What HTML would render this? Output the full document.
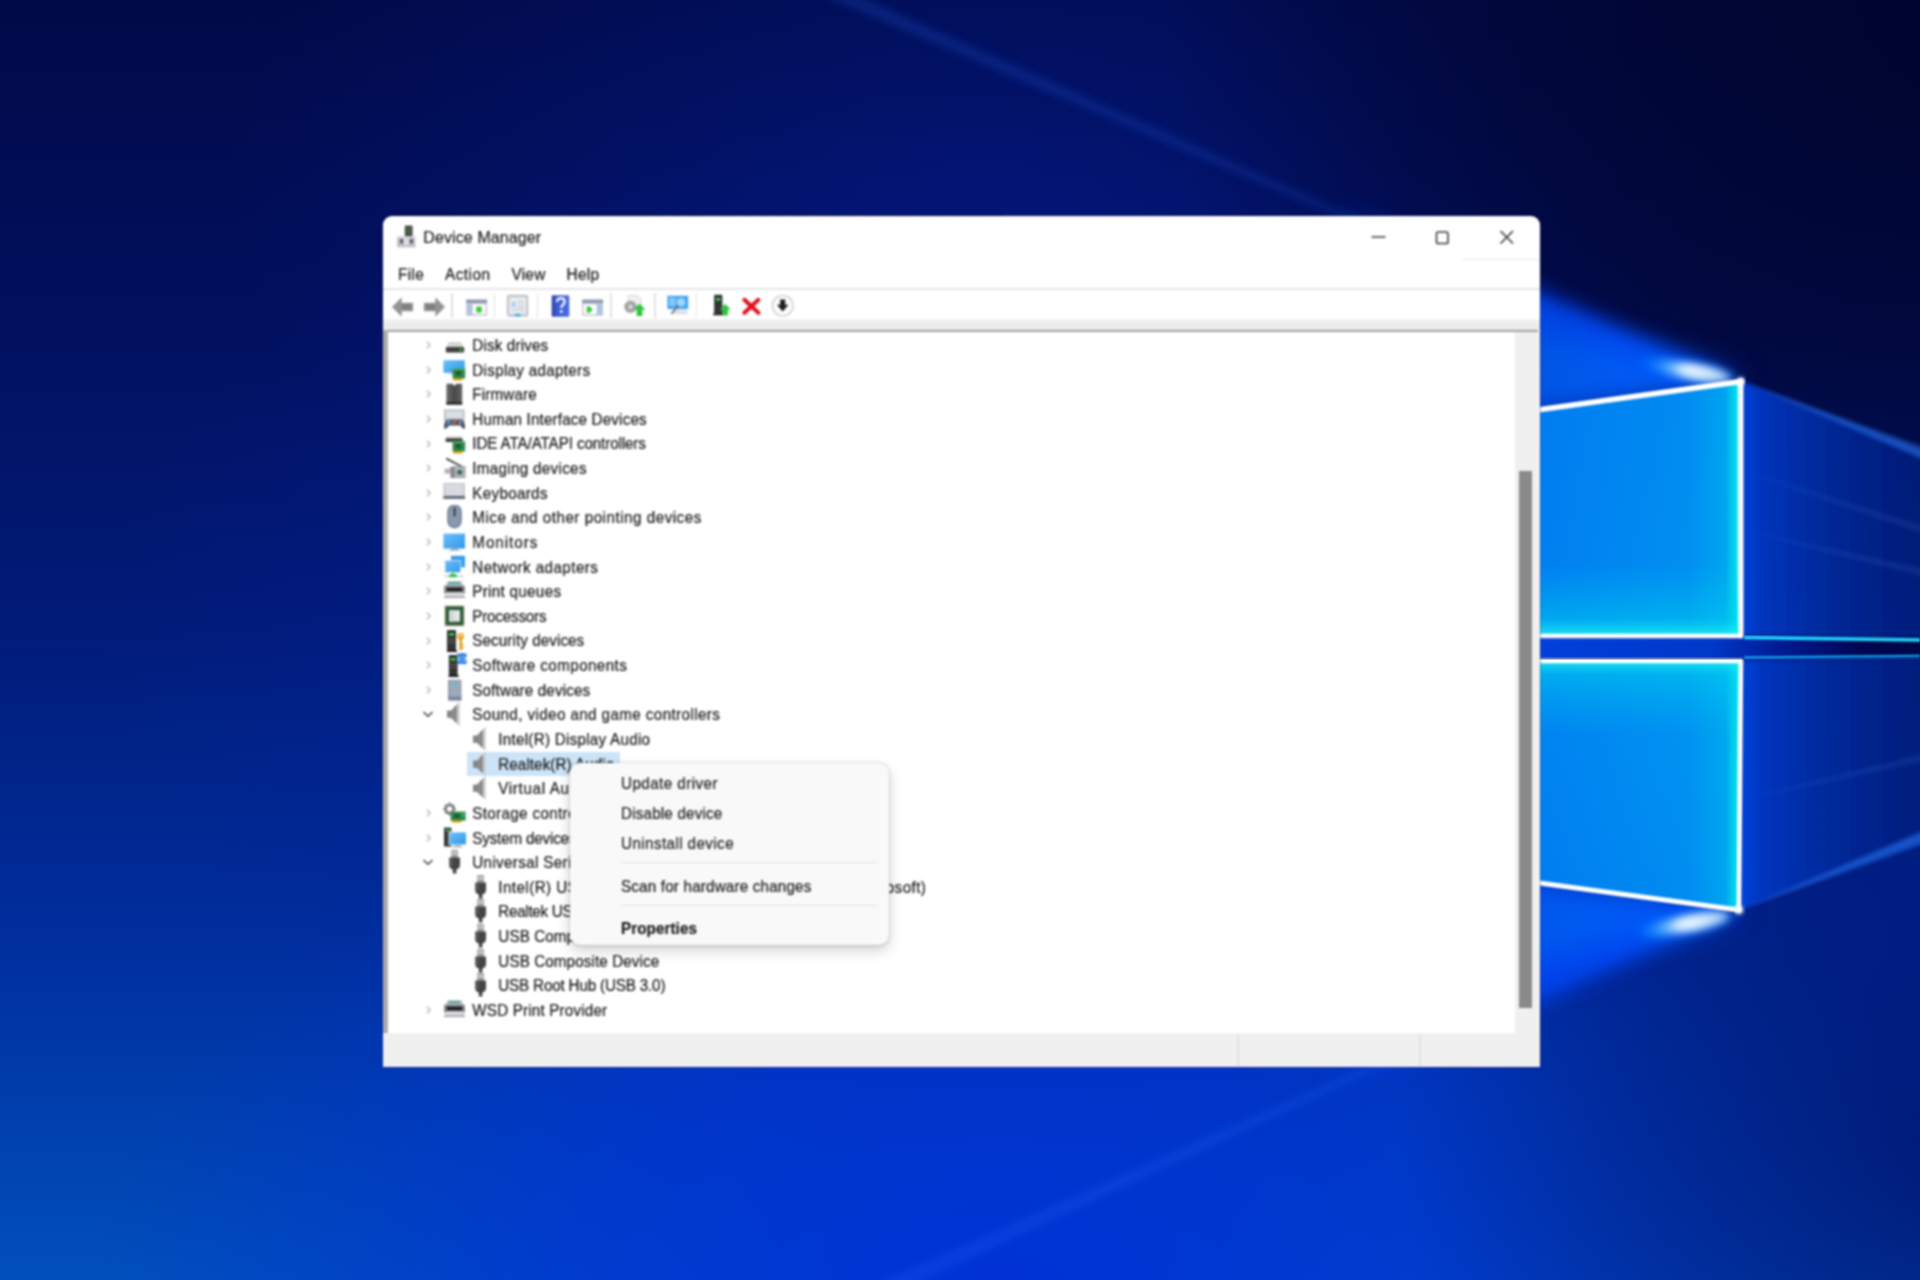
<!DOCTYPE html>
<html><head><meta charset="utf-8"><title>Device Manager</title>
<style>
html,body{margin:0;padding:0;width:1920px;height:1280px;overflow:hidden;background:#011c78;font-family:"Liberation Sans",sans-serif;}
.ab{position:absolute;}
#desk{position:absolute;left:0;top:0;width:1920px;height:1280px;}
#win{position:absolute;left:383px;top:216px;width:1156.6px;height:850.5px;background:#fff;border-radius:9px 9px 2px 2px;overflow:hidden;box-shadow:0 0 0 1px rgba(20,30,80,.35);}
#soft{filter:blur(.8px);position:absolute;left:0;top:0;width:1920px;height:1280px;}
.t,.ci,.mn,#title{transform:scaleY(1.05);transform-origin:0 76.3%;}
.t{position:absolute;white-space:nowrap;font-size:15.2px;line-height:20px;color:#1b1b1b;-webkit-text-stroke:.22px #1b1b1b;}
.sel{position:absolute;background:#cce4f7;}
#title{position:absolute;left:423.3px;top:227.8px;font-size:16px;line-height:20px;color:#1b1b1b;white-space:nowrap;-webkit-text-stroke:.2px #1b1b1b;}
.mn{position:absolute;top:265px;font-size:15.4px;line-height:20px;color:#1b1b1b;white-space:nowrap;-webkit-text-stroke:.22px #1b1b1b;}
#tbline{position:absolute;left:383px;top:288px;width:1157px;height:2px;background:#e6e6e6;}
#tbgrey{position:absolute;left:383px;top:319px;width:1157px;height:11px;background:linear-gradient(#f6f6f6,#ececec 30%,#ececec);}
#tbdark{position:absolute;left:386px;top:329.6px;width:1152px;height:2.6px;background:linear-gradient(#a0a0a0,#8e8e8e 60%,#d8d8d8);}
#lborder{position:absolute;left:383px;top:330px;width:5px;height:702.5px;background:linear-gradient(90deg,#b8b8b8,#a6a6a6 50%,#b4b4b4);}
#sbtrack{position:absolute;left:1515px;top:332px;width:25px;height:702px;background:#f0f0f0;}
#sbthumb{position:absolute;left:1519.2px;top:470.5px;width:12.8px;height:537.5px;background:#8a8a8a;}
#status{position:absolute;left:383px;top:1032.5px;width:1157px;height:34px;background:#f0f0f0;}
.sdiv{position:absolute;top:1036px;width:1.5px;height:30px;background:#e0e0e0;}
#ctx{position:absolute;left:569.7px;top:763.3px;width:319.7px;height:181.5px;background:#f9f9f9;border-radius:10px;box-shadow:0 0 0 1px rgba(0,0,0,.06),0 6px 14px rgba(0,0,0,.17),0 1px 4px rgba(0,0,0,.10);}
.ci{position:absolute;left:621px;font-size:15.2px;line-height:20px;color:#1b1b1b;white-space:nowrap;-webkit-text-stroke:.22px #1b1b1b;}
.tsep{position:absolute;top:292.5px;width:1.6px;height:25.5px;background:#e2e2e2;}
.cs{position:absolute;left:622px;width:256px;height:1.6px;background:#e3e3e3;}
</style></head>
<body>
<div id="desk">
<svg class="ab" style="left:0;top:0" width="1920" height="1280" viewBox="0 0 1920 1280">
<defs>
 <linearGradient id="gV" x1="0" y1="0" x2="0" y2="1">
  <stop offset="0" stop-color="#010a48"/><stop offset=".25" stop-color="#01105e"/><stop offset=".5" stop-color="#011c7a"/><stop offset=".75" stop-color="#0030a0"/><stop offset="1" stop-color="#0050bc"/>
 </linearGradient>
 <radialGradient id="gTR" cx="1960" cy="40" r="640" gradientUnits="userSpaceOnUse" gradientTransform="translate(1960 40) scale(1.25 1) translate(-1960 -40)">
  <stop offset="0" stop-color="#00042c" stop-opacity=".9"/><stop offset=".55" stop-color="#00042c" stop-opacity=".6"/><stop offset="1" stop-color="#00042a" stop-opacity="0"/>
 </radialGradient>
 <radialGradient id="gBR" cx="1960" cy="1150" r="560" gradientUnits="userSpaceOnUse">
  <stop offset="0" stop-color="#000c66" stop-opacity=".75"/><stop offset=".6" stop-color="#000c66" stop-opacity=".36"/><stop offset="1" stop-color="#000c66" stop-opacity="0"/>
 </radialGradient>
 <radialGradient id="gBot" cx="1000" cy="1300" r="700" gradientUnits="userSpaceOnUse" gradientTransform="translate(1000 1300) scale(1.3 .75) translate(-1000 -1300)">
  <stop offset="0" stop-color="#0030d8" stop-opacity=".95"/><stop offset=".5" stop-color="#0030d8" stop-opacity=".6"/><stop offset="1" stop-color="#0030d8" stop-opacity="0"/>
 </radialGradient>
 <radialGradient id="gTopC" cx="980" cy="180" r="760" gradientUnits="userSpaceOnUse" gradientTransform="translate(980 180) scale(1 .55) translate(-980 -180)">
  <stop offset="0" stop-color="#0420a0" stop-opacity=".38"/><stop offset="1" stop-color="#0420a0" stop-opacity="0"/>
 </radialGradient>
 <radialGradient id="gMid" cx="1000" cy="640" r="900" gradientUnits="userSpaceOnUse" gradientTransform="translate(1000 640) scale(1 .6) translate(-1000 -640)">
  <stop offset="0" stop-color="#0020a8" stop-opacity=".5"/><stop offset="1" stop-color="#0020a8" stop-opacity="0"/>
 </radialGradient>
 <linearGradient id="gPane" gradientUnits="userSpaceOnUse" x1="1300" y1="0" x2="1741" y2="0">
  <stop offset="0" stop-color="#006cf0"/><stop offset=".55" stop-color="#007cf0"/><stop offset=".88" stop-color="#008cf0"/><stop offset=".965" stop-color="#00a4f0"/><stop offset=".988" stop-color="#00dcea"/><stop offset="1" stop-color="#c0ffff"/>
 </linearGradient>
 <linearGradient id="gPaneB" x1="0" y1="0" x2="0" y2="1">
  <stop offset="0" stop-color="#00d0f0" stop-opacity="0"/><stop offset=".72" stop-color="#00d0f0" stop-opacity=".05"/><stop offset=".93" stop-color="#00d8f0" stop-opacity=".45"/><stop offset="1" stop-color="#20f0f0" stop-opacity=".9"/>
 </linearGradient>
 <linearGradient id="gPaneT" x1="0" y1="0" x2="0" y2="1">
  <stop offset="0" stop-color="#20f0f0" stop-opacity=".9"/><stop offset=".06" stop-color="#00d8f0" stop-opacity=".5"/><stop offset=".3" stop-color="#00c0f0" stop-opacity=".12"/><stop offset="1" stop-color="#00d0f0" stop-opacity="0"/>
 </linearGradient>
 <linearGradient id="gProj" gradientUnits="userSpaceOnUse" x1="1741" y1="0" x2="1920" y2="0">
  <stop offset="0" stop-color="#0044dc" stop-opacity="1"/><stop offset=".12" stop-color="#0036c0" stop-opacity=".95"/><stop offset=".5" stop-color="#002a9c" stop-opacity=".9"/><stop offset="1" stop-color="#001c7c" stop-opacity=".85"/>
 </linearGradient>
 <linearGradient id="gGap" gradientUnits="userSpaceOnUse" x1="1540" y1="0" x2="1920" y2="0">
  <stop offset="0" stop-color="#0040dc"/><stop offset=".45" stop-color="#0038c8"/><stop offset=".62" stop-color="#001c98"/><stop offset=".85" stop-color="#000650"/><stop offset="1" stop-color="#000648"/>
 </linearGradient>
 <radialGradient id="gFlare"><stop offset="0" stop-color="#f4fbff" stop-opacity="1"/><stop offset=".3" stop-color="#9cd8ff" stop-opacity=".95"/><stop offset=".6" stop-color="#1c9cff" stop-opacity=".7"/><stop offset="1" stop-color="#0060ff" stop-opacity="0"/></radialGradient>
 <linearGradient id="gFanM" gradientUnits="userSpaceOnUse" x1="1330" y1="0" x2="1700" y2="0"><stop offset="0" stop-color="#000"/><stop offset=".45" stop-color="#ccc"/><stop offset="1" stop-color="#fff"/></linearGradient>
 <mask id="mFan" maskUnits="userSpaceOnUse" x="0" y="0" width="1920" height="1280"><rect width="1920" height="1280" fill="url(#gFanM)"/></mask>
 <filter id="b2"><feGaussianBlur stdDeviation="2"/></filter>
 <filter id="b1"><feGaussianBlur stdDeviation="1"/></filter>
 <filter id="b4"><feGaussianBlur stdDeviation="4"/></filter>
 <filter id="b10"><feGaussianBlur stdDeviation="10"/></filter>
 <filter id="b20"><feGaussianBlur stdDeviation="18"/></filter>
</defs>
<rect width="1920" height="1280" fill="url(#gV)"/>
<rect width="1920" height="1280" fill="url(#gMid)"/>
<rect width="1920" height="1280" fill="url(#gTopC)"/>
<rect width="1920" height="1280" fill="url(#gBot)"/>
<rect width="1920" height="1280" fill="url(#gTR)"/>
<rect width="1920" height="1280" fill="url(#gBR)"/>
<!-- faint long rays -->
<g filter="url(#b4)">
 <path d="M1741 389 L806 -12 L840 -12 Z" fill="#2a6cff" opacity=".2"/>
 <path d="M1739 901 L858 1292 L898 1292 Z" fill="#2a6cff" opacity=".2"/>
</g>
<!-- fans above / below panes -->
<g mask="url(#mFan)">
<g filter="url(#b10)">
 <path d="M1741 381 L1300 186 L1300 443 Z" fill="#0048ff" opacity="1"/>
 <path d="M1739 910 L1300 1112 L1300 850 Z" fill="#0044f8" opacity="1"/>
</g>
<g filter="url(#b20)">
 <path d="M1741 381 L1420 300 L1420 430 Z" fill="#0070ff" opacity=".7"/>
 <path d="M1739 910 L1420 990 L1420 870 Z" fill="#0070ff" opacity=".7"/>
</g>
</g>
<!-- projection to the right -->
<g filter="url(#b2)">
 <path d="M1741 381 L1930 456 L1930 638 L1741 636 Z" fill="url(#gProj)"/>
 <path d="M1741 660 L1930 658 L1930 834 L1739 910 Z" fill="url(#gProj)"/>
</g>
<g filter="url(#b2)" opacity=".55">
 <path d="M1741 381 L1930 450 L1930 462 Z" fill="#2a7cff"/>
 <path d="M1739 910 L1930 828 L1930 841 Z" fill="#2a7cff"/>
</g>
<g filter="url(#b2)" opacity=".11">
 <path d="M1741 470 L1930 528 L1930 536 Z" fill="#6aa8ff"/>
 <path d="M1741 530 L1930 570 L1930 578 Z" fill="#6aa8ff"/>
 <path d="M1741 800 L1930 752 L1930 760 Z" fill="#6aa8ff"/>
</g>
<!-- flares -->
<g filter="url(#b4)">
 <ellipse cx="1690" cy="371" rx="56" ry="13" transform="rotate(11 1688 371)" fill="url(#gFlare)"/>
 <ellipse cx="1686" cy="924" rx="58" ry="14" transform="rotate(-11 1685 924)" fill="url(#gFlare)"/>
</g>
<g filter="url(#b4)"><ellipse cx="1704" cy="373" rx="27" ry="6" transform="rotate(11 1704 373)" fill="#fff" opacity=".75"/><ellipse cx="1701" cy="921" rx="28" ry="6.5" transform="rotate(-11 1701 921)" fill="#fff" opacity=".75"/></g>
<!-- gap band -->
<rect x="1300" y="638" width="620" height="20" fill="url(#gGap)"/>
<!-- panes -->
<path d="M1300 443 L1741 381 L1741 636 L1300 636 Z" fill="url(#gPane)"/>
<path d="M1300 443 L1741 381 L1741 636 L1300 636 Z" fill="url(#gPaneB)"/>
<path d="M1300 660 L1741 660 L1739 910 L1300 850 Z" fill="url(#gPane)"/>
<path d="M1300 660 L1741 660 L1739 910 L1300 850 Z" fill="url(#gPaneT)"/>
<!-- bright edges -->
<g filter="url(#b1)" fill="none" stroke="#ffffff" stroke-linecap="round">
 <path d="M1300 443 L1741 381.5" stroke-width="5.5"/>
 <path d="M1741 381 L1741 636" stroke-width="5"/>
 <path d="M1300 636 L1741 636" stroke-width="4.5"/>
 <path d="M1300 661 L1741 661" stroke-width="4.5"/>
 <path d="M1741 661 L1739 910" stroke-width="4.5"/>
 <path d="M1300 850.5 L1739 910" stroke-width="5"/>
</g>
<g filter="url(#b2)"><circle cx="1741" cy="381" r="3.6" fill="#fff"/><circle cx="1739" cy="910" r="4" fill="#fff"/></g>
<g filter="url(#b1)" fill="none">
 <path d="M1744 637.5 L1920 640" stroke-width="3.5" stroke="#20d8ff"/>
 <path d="M1744 657.5 L1920 656" stroke-width="2.5" stroke="#10a0f0"/>
</g>
</svg>

</div>
<svg width="0" height="0" style="position:absolute"><defs>
<linearGradient id="lgDark" x1="0" y1="0" x2="1" y2="0"><stop offset="0" stop-color="#6c6c6c"/><stop offset=".5" stop-color="#484848"/><stop offset="1" stop-color="#666"/></linearGradient>
<linearGradient id="lgBlue" x1="0" y1="0" x2="1" y2="1"><stop offset="0" stop-color="#6cc0fa"/><stop offset="1" stop-color="#2f98ea"/></linearGradient>
<linearGradient id="lgSpk" x1="0" y1="0" x2="1" y2="0"><stop offset="0" stop-color="#7c7c7c"/><stop offset=".55" stop-color="#a8a8a8"/><stop offset="1" stop-color="#d4d4d4"/></linearGradient>
<linearGradient id="lgGrey" x1="0" y1="0" x2="0" y2="1"><stop offset="0" stop-color="#d6d9de"/><stop offset="1" stop-color="#aeb3ba"/></linearGradient>
<linearGradient id="lgHelp" x1="0" y1="0" x2="1" y2="0"><stop offset="0" stop-color="#2a3f9c"/><stop offset=".25" stop-color="#3a5ad4"/><stop offset="1" stop-color="#4a6ae0"/></linearGradient>
<symbol id="i-devmgr" viewBox="0 0 22 24">
 <rect x="1" y="12.6" width="18.4" height="10.8" fill="#c4c4c8"/><rect x="1" y="12.6" width="18.4" height="1.6" fill="#d8d8dc"/>
 <rect x="4" y="15" width="3" height="4.6" fill="#606064"/><rect x="14" y="15" width="3" height="4.6" fill="#606064"/><rect x="8.6" y="14.6" width="3.4" height="6.4" fill="#e4e4ea"/>
 <rect x="8.8" y="1.6" width="7.8" height="10.6" rx="1" fill="#4c4c4c"/><rect x="10.6" y="3.6" width="4.2" height="6" rx=".8" fill="#3c6a3c"/>
</symbol>
<symbol id="i-disk" viewBox="0 0 24 24"><path d="M6 9 H18 L21 14.5 H3 Z" fill="#d4d4d4"/><rect x="2.8" y="14" width="18.4" height="5.6" rx="1.4" fill="#3e3e3e"/><rect x="16.4" y="15.8" width="3" height="1.8" fill="#48c848"/></symbol>
<symbol id="i-card" viewBox="0 0 24 24"><rect x="10" y="18" width="9.6" height="3.6" rx="1.6" fill="#f0a000"/><rect x="9.6" y="9.4" width="12.6" height="10" fill="#2e8c4c"/><rect x="12.6" y="12" width="5.6" height="4.6" fill="#1d5c30"/><rect x="9.6" y="9.4" width="12.6" height="1.4" fill="#58b070"/></symbol>
<symbol id="i-display" viewBox="0 0 24 24"><rect x=".4" y="2.2" width="21.4" height="12.6" fill="url(#lgBlue)"/><rect x="7" y="14.8" width="8" height="1.6" fill="#b8c4d0"/><use href="#i-card" y="1"/></symbol>
<symbol id="i-firmware" viewBox="0 0 24 24"><path d="M3.4 1.8 H9.4 L11.4 4 L13.4 1.8 H19.2 V22.6 H3.4 Z" fill="url(#lgDark)"/><rect x="3.4" y="20" width="15.8" height="2.6" fill="#2a2a2a"/></symbol>
<symbol id="i-hid" viewBox="0 0 24 24"><rect x="1.4" y="3" width="19.6" height="10.6" fill="#cdd1d8" stroke="#a4aab4" stroke-width=".8"/><rect x="3.4" y="5" width="15.6" height="1.6" fill="#e8eaee"/><rect x="3.4" y="8" width="15.6" height="1.6" fill="#e8eaee"/>
 <path d="M1 21.6 Q.6 13.6 4.6 12.4 H18.4 Q22.6 13.6 22 21.6 Q19.4 22.6 17.4 18.4 H6 Q3.6 22.6 1 21.6Z" fill="#4c566a"/><circle cx="5.6" cy="15" r="1.7" fill="#49a8f0"/><circle cx="10.6" cy="15.4" r="1.2" fill="#f08a30"/><circle cx="13" cy="14.4" r="1.1" fill="#e04848"/><circle cx="17.4" cy="15.4" r="1.6" fill="#8a94a8"/></symbol>
<symbol id="i-ide" viewBox="0 0 24 24"><rect x="3" y="4" width="16" height="2.6" fill="#dcdcdc"/><rect x="2.6" y="6.2" width="17" height="3.8" rx="1" fill="#404040"/><use href="#i-card"/></symbol>
<symbol id="i-imaging" viewBox="0 0 24 24"><path d="M3.6 1.6 L20.4 10.4 L19.6 12 L2.8 3.4Z" fill="#505050"/><rect x="1.6" y="12.6" width="7" height="5" fill="#b4b4b4"/><rect x="7.4" y="10.6" width="4.6" height="11.4" fill="#8a8a8a"/><rect x="11.4" y="10.8" width="10.6" height="10.6" fill="#b8bcc0" stroke="#808488" stroke-width=".8"/><rect x="14.2" y="14" width="5" height="4.6" fill="#386858"/></symbol>
<symbol id="i-keyboard" viewBox="0 0 24 24"><rect x=".4" y="2" width="21.6" height="15.6" fill="#c6cacf"/><rect x="2.2" y="4" width="18" height="2.2" fill="#e2e4e8"/><rect x="2.2" y="7.6" width="18" height="2.2" fill="#e2e4e8"/><rect x="2.2" y="11.2" width="18" height="2.2" fill="#e2e4e8"/><rect x=".4" y="15.2" width="21.6" height="2.6" fill="#566070"/></symbol>
<symbol id="i-mouse" viewBox="0 0 24 24"><rect x="4.2" y="-.6" width="14.6" height="24" rx="7.3" fill="#76869a"/><rect x="6" y="1" width="11" height="20.6" rx="5.5" fill="#8a9aae"/><rect x="10.6" y="2.4" width="1.9" height="9" rx=".9" fill="#2c3440"/></symbol>
<symbol id="i-monitor" viewBox="0 0 24 24"><rect x=".4" y="3.6" width="21.6" height="15" fill="url(#lgBlue)"/><rect x="7.6" y="18.6" width="7.6" height="1.4" fill="#9aa4b0"/><rect x="5.6" y="20" width="11.6" height="1.2" fill="#c4ccd4"/></symbol>
<symbol id="i-network" viewBox="0 0 24 24"><rect x="8" y=".8" width="14" height="11.6" fill="#3a9cec"/><rect x="2" y="5.6" width="15.4" height="12" fill="url(#lgBlue)" stroke="#d8ecfc" stroke-width=".8"/><rect x="1" y="20.6" width="20" height="1.2" fill="#c0c4c8"/><path d="M10 17.6 L14.6 21.8 H5.4Z" fill="#34c048"/><rect x="6" y="19.6" width="8" height="2.6" rx="1" fill="#34c048"/></symbol>
<symbol id="i-printer" viewBox="0 0 24 24"><path d="M4.6 2.2 H18.4 L20 7 H3Z" fill="#b4b8bc"/><rect x="6" y="3.4" width="11" height="1.6" fill="#3aa890"/><rect x="1" y="6.4" width="21" height="8.6" rx="1.4" fill="#8a8e92"/><rect x="3.6" y="8.6" width="15.8" height="3.8" fill="#1e1e1e"/><path d="M3 13.6 H20 L22 18.6 H1Z" fill="#dadcde"/><rect x="1" y="17.4" width="21" height="1.6" fill="#a0a4a8"/></symbol>
<symbol id="i-cpu" viewBox="0 0 24 24"><rect x="1.6" y="1.6" width="19.8" height="20.6" rx="1" fill="#c8bc94"/><rect x="2.4" y="2.4" width="18.2" height="19" fill="#2b5c3b"/><rect x="6" y="6.2" width="11" height="11.4" fill="#e6e6e6"/><rect x="6" y="6.2" width="5.5" height="11.4" fill="#d8d8d8"/></symbol>
<symbol id="i-tower" viewBox="0 0 24 24"><rect x="0" y="0" width="9" height="20.4" rx=".8" fill="#333"/><rect x="-1" y="20" width="11" height="2" rx=".6" fill="#1c1c1c"/><rect x="2" y="3" width="5" height="2.6" fill="#38d048"/><rect x="1.2" y="9" width="6.6" height="1" fill="#666"/><rect x="1.2" y="12" width="6.6" height="1" fill="#666"/></symbol>
<symbol id="i-security" viewBox="0 0 24 24"><use href="#i-tower" x="4" y="1"/><circle cx="17.6" cy="7.4" r="3.4" fill="#e8a820"/><circle cx="17.6" cy="6.6" r="1.1" fill="#fff"/><rect x="16.4" y="9.6" width="2.6" height="11.6" fill="#e0a020"/><rect x="18.6" y="15" width="2" height="1.6" fill="#e0a020"/><rect x="18.6" y="18" width="2" height="1.6" fill="#e0a020"/></symbol>
<symbol id="i-swcomp" viewBox="0 0 24 24"><use href="#i-tower" x="5.6" y="2"/><path d="M14.4 .6 H18 V-1 H20.4 V.6 H23.6 V4 H22 V6.4 H23.6 V11 H14.4 V7.4 H16 V4.6 H14.4Z" fill="#2a80e4"/><rect x="14.4" y="3.6" width="9" height="1.2" fill="#8cc0f8"/><rect x="14.4" y="7" width="9" height="1.2" fill="#8cc0f8"/></symbol>
<symbol id="i-swdev" viewBox="0 0 24 24"><rect x="5" y="1.8" width="13.4" height="20.6" rx="1" fill="#8c98a8"/><rect x="6.2" y="3" width="11" height="18" fill="#9eaaba"/><rect x="5" y="18.6" width="13.4" height="3.8" fill="#7c8898"/><circle cx="11.7" cy="6.6" r="1.7" fill="#40c8e8"/></symbol>
<symbol id="i-sound" viewBox="0 0 24 24"><rect x="4" y="8.6" width="5" height="7.2" fill="#868686"/><path d="M8 8.4 L16.6 -.4 V24 L8 16Z" fill="url(#lgSpk)"/><path d="M12.4 4 V20" stroke="#6e6e6e" stroke-width="1.2"/></symbol>
<symbol id="i-storage" viewBox="0 0 24 24"><circle cx="6.6" cy="8" r="4" fill="none" stroke="#7a7a7a" stroke-width="2.6"/><g stroke="#7a7a7a" stroke-width="2"><path d="M6.6 1.6 V3.6 M6.6 12.4 V14.4 M.4 8 H2.4 M10.8 8 H12.8 M2.2 3.6 L3.6 5 M9.6 11 L11 12.4 M11 3.6 L9.6 5 M2.2 12.4 L3.6 11"/></g><rect x="8.6" y="18.2" width="10" height="3.4" rx="1.5" fill="#f0a000"/><rect x="7.6" y="10.6" width="15" height="9" fill="#2e8c4c"/><rect x="11" y="13" width="6" height="4" fill="#1d5c30"/><rect x="19" y="12.4" width="2.4" height="2.4" fill="#58b070"/></symbol>
<symbol id="i-system" viewBox="0 0 24 24"><rect x="1" y="1.6" width="7.4" height="19" fill="#363636"/><rect x="2.4" y="3.6" width="4.6" height="1.6" fill="#38d048"/><rect x="5.6" y="5.6" width="18" height="13.4" fill="#fff"/><rect x="6.4" y="6.4" width="16.6" height="12" fill="url(#lgBlue)"/><rect x="11" y="19" width="7" height="1.6" fill="#9aa4b0"/><rect x="9" y="20.6" width="11" height="1.2" fill="#c4ccd4"/></symbol>
<symbol id="i-usb" viewBox="0 0 24 24"><rect x="8.4" y="-.4" width="6.4" height="8" fill="#8a8a8a"/><rect x="9.6" y=".8" width="1.5" height="4.6" fill="#e8e8e8"/><rect x="12.2" y=".8" width="1.5" height="4.6" fill="#e8e8e8"/><path d="M6.2 7.6 H17 V15 Q17 18.6 13.4 19.4 V23.6 H9.8 V19.4 Q6.2 18.6 6.2 15Z" fill="#444"/><rect x="7.4" y="8.6" width="2" height="7" fill="#606060"/></symbol>
<!-- toolbar -->
<symbol id="t-back" viewBox="0 0 24 24"><path d="M0 12 L10.6 1.4 V7.4 H23 V16.6 H10.6 V22.6Z" fill="#949494"/><path d="M10.6 9.4 H21 V14.4 H10.6Z" fill="#7e7e7e"/></symbol>
<symbol id="t-win" viewBox="0 0 24 24"><rect x=".4" y="4" width="22.8" height="17.6" fill="#c2c8d2"/><rect x=".4" y="4" width="22.8" height="3.6" fill="#8e98ae"/><rect x="2" y="9" width="4.4" height="11" fill="#a8c4e8"/><rect x="7.6" y="9" width="14" height="11" fill="#fff"/><rect x="11.4" y="11.6" width="6" height="6.4" fill="#38c838"/></symbol>
<symbol id="t-win2" viewBox="0 0 24 24"><rect x=".4" y="4" width="22.8" height="17.6" fill="#c2c8d2"/><rect x=".4" y="4" width="22.8" height="3.6" fill="#8e98ae"/><rect x="17.4" y="9" width="4.4" height="11" fill="#a8c4e8"/><rect x="2" y="9" width="14" height="11" fill="#fff"/><path d="M5.4 11.4 H8.6 L12 14.8 L8.6 18.2 H5.4Z" fill="#38c838"/></symbol>
<symbol id="t-prop" viewBox="0 0 24 24"><rect x="1.4" y=".6" width="21" height="21.6" rx="1.4" fill="#dde0e4" stroke="#a8acb2" stroke-width="1.2"/><rect x="4" y="3.6" width="16" height="15" fill="#eef0f2"/><rect x="5.4" y="7" width="4.6" height="6" fill="#a8d4f4"/><path d="M11.6 6.6 H18.6 M11.6 9.6 H18.6 M11.6 12.6 H18.6 M5.4 15.6 H18.6" stroke="#c0c4ca" stroke-width="1.2"/><rect x="9" y="20" width="6" height="2.6" fill="#38b4e8"/></symbol>
<symbol id="t-help" viewBox="0 0 20 24"><rect x=".6" y=".4" width="18.8" height="23" rx="1.2" fill="url(#lgHelp)"/><path d="M6.2 7.4 Q6.4 3.6 10.4 3.6 Q14.4 3.6 14.4 7 Q14.4 9.2 12.4 10.6 Q10.8 11.8 10.8 14" fill="none" stroke="#e8ecff" stroke-width="2.7"/><rect x="9.4" y="16.2" width="2.8" height="3" fill="#e8ecff"/></symbol>
<symbol id="t-upd" viewBox="0 0 24 24"><path d="M5 .6 H15 L19 4.6 V14 H5Z" fill="#f0f0f0" stroke="#d0d0d0" stroke-width=".8"/><circle cx="7.4" cy="12.6" r="4.4" fill="none" stroke="#a4a4a4" stroke-width="4.4"/><circle cx="7.4" cy="12.6" r="1.7" fill="#dadada"/><path d="M17 9.4 L23.4 15.6 H20 V22.4 H14 V15.6 H10.6Z" fill="#2ec43e"/></symbol>
<symbol id="t-scan" viewBox="0 0 24 24"><rect x=".6" y=".8" width="22.8" height="14.6" fill="#4aa4ee"/><rect x="2.6" y="3" width="7" height="9" fill="#84c8fa"/><circle cx="15.6" cy="8" r="4.6" fill="#9cd4fc"/><path d="M12.4 11.6 L5 20.6" stroke="#68707c" stroke-width="1.8"/><rect x="9" y="17" width="13" height="1.6" fill="#c4ccd6"/><rect x="8" y="19.4" width="15" height="1.6" fill="#d4dae2"/></symbol>
<symbol id="t-enable" viewBox="0 0 24 24"><rect x="3.4" y=".4" width="9" height="20.6" rx=".8" fill="#343434"/><rect x="2.4" y="20.6" width="11" height="2.2" rx=".6" fill="#1c1c1c"/><rect x="5.4" y="4" width="5" height="2.8" fill="#38d048"/><path d="M15.4 10.4 L21.6 16.4 H18.4 V23 H12.4 V16.4 H9.2Z" fill="#2ec43e"/></symbol>
<symbol id="t-x" viewBox="0 0 24 24"><path d="M3 3.6 L21 20.4 M21 3.6 L3 20.4" stroke="#e0121e" stroke-width="5.2" stroke-linecap="round"/></symbol>
<symbol id="t-down" viewBox="0 0 24 24"><circle cx="12" cy="12" r="10.6" fill="#fcfcfc" stroke="#d0d0d0" stroke-width="1.5"/><path d="M9.4 5.6 H14.6 V11 H18 L12 18 L6 11 H9.4Z" fill="#1e1e1e"/></symbol>
</defs></svg>

<div id="soft">
<div id="win"></div>
<div class="ab" style="left:392px;top:214.7px;width:612px;height:1.3px;background:repeating-linear-gradient(90deg,rgba(8,8,36,.85) 0 10px,rgba(8,8,36,.25) 10px 13px,rgba(8,8,36,.8) 13px 31px,rgba(8,8,36,.2) 31px 35px)"></div>
<!-- title bar -->
<svg class="ab" style="left:396px;top:224px" width="22" height="24"><use href="#i-devmgr"/></svg>
<span id="title" style="letter-spacing:0.107px;">Device Manager</span>
<svg class="ab" style="left:1368px;top:226px" width="160" height="24" viewBox="0 0 160 24">
 <path d="M3.5 11 H17.5" stroke="#3a3a3a" stroke-width="1.5" fill="none"/>
 <rect x="68.5" y="6" width="11.5" height="11.5" rx="1.8" fill="none" stroke="#3a3a3a" stroke-width="1.6"/>
 <path d="M132.5 5 L145 17.5 M145 5 L132.5 17.5" stroke="#3a3a3a" stroke-width="1.6" fill="none"/>
</svg>
<div class="ab" style="left:1462px;top:258.5px;width:78px;height:1.2px;background:#ececec"></div>
<!-- menu bar -->
<span class="mn" style="letter-spacing:0.297px;left:398px">File</span>
<span class="mn" style="letter-spacing:0.453px;left:445px">Action</span>
<span class="mn" style="letter-spacing:0.227px;left:511.5px">View</span>
<span class="mn" style="letter-spacing:0.336px;left:566.5px">Help</span>

<div id="tbline"></div>
<svg class="ab" style="left:390.6px;top:295.6px" width="24" height="22"><use href="#t-back"/></svg>
<svg class="ab" style="left:421.6px;top:295.6px;transform:scaleX(-1)" width="24" height="22"><use href="#t-back"/></svg>
<div class="tsep" style="left:451.4px"></div>
<svg class="ab" style="left:464.6px;top:296px" width="23.6" height="22"><use href="#t-win"/></svg>
<div class="tsep" style="left:493.6px"></div>
<svg class="ab" style="left:506.4px;top:294.8px" width="23.4" height="22.6"><use href="#t-prop"/></svg>
<div class="tsep" style="left:536.6px"></div>
<svg class="ab" style="left:551px;top:294.6px" width="19" height="22.4"><use href="#t-help"/></svg>
<svg class="ab" style="left:580.8px;top:296px" width="23.6" height="22"><use href="#t-win2"/></svg>
<div class="tsep" style="left:610px"></div>
<svg class="ab" style="left:623px;top:294.8px" width="23.6" height="22.6"><use href="#t-upd"/></svg>
<div class="tsep" style="left:654px"></div>
<svg class="ab" style="left:665.6px;top:295.4px" width="23.6" height="22"><use href="#t-scan"/></svg>
<div class="tsep" style="left:695.6px"></div>
<svg class="ab" style="left:710.6px;top:294.4px" width="22" height="22.8"><use href="#t-enable"/></svg>
<svg class="ab" style="left:742.2px;top:296.6px" width="18.8" height="18.6"><use href="#t-x"/></svg>
<svg class="ab" style="left:771.4px;top:294.4px" width="23.4" height="23.4"><use href="#t-down"/></svg>

<div id="tbgrey"></div><div id="tbdark"></div>
<div id="lborder"></div>
<!-- tree -->
<svg class="ab" style="left:424px;top:339.00px" width="9" height="12" viewBox="0 0 9 12"><path d="M2.9 2.6 L6.1 6 L2.9 9.4" fill="none" stroke="#b0b0b0" stroke-width="1.25"/></svg>
<svg class="ab ic" style="left:443px;top:333.00px" width="24" height="24"><use href="#i-disk"/></svg>
<span class="t" style="letter-spacing:0.158px;left:472.3px;top:335.90px">Disk drives</span>
<svg class="ab" style="left:424px;top:363.63px" width="9" height="12" viewBox="0 0 9 12"><path d="M2.9 2.6 L6.1 6 L2.9 9.4" fill="none" stroke="#b0b0b0" stroke-width="1.25"/></svg>
<svg class="ab ic" style="left:443px;top:357.63px" width="24" height="24"><use href="#i-display"/></svg>
<span class="t" style="letter-spacing:0.305px;left:472.3px;top:360.53px">Display adapters</span>
<svg class="ab" style="left:424px;top:388.26px" width="9" height="12" viewBox="0 0 9 12"><path d="M2.9 2.6 L6.1 6 L2.9 9.4" fill="none" stroke="#b0b0b0" stroke-width="1.25"/></svg>
<svg class="ab ic" style="left:443px;top:382.26px" width="24" height="24"><use href="#i-firmware"/></svg>
<span class="t" style="letter-spacing:0.152px;left:472.3px;top:385.16px">Firmware</span>
<svg class="ab" style="left:424px;top:412.89px" width="9" height="12" viewBox="0 0 9 12"><path d="M2.9 2.6 L6.1 6 L2.9 9.4" fill="none" stroke="#b0b0b0" stroke-width="1.25"/></svg>
<svg class="ab ic" style="left:443px;top:406.89px" width="24" height="24"><use href="#i-hid"/></svg>
<span class="t" style="letter-spacing:0.173px;left:472.3px;top:409.79px">Human Interface Devices</span>
<svg class="ab" style="left:424px;top:437.52px" width="9" height="12" viewBox="0 0 9 12"><path d="M2.9 2.6 L6.1 6 L2.9 9.4" fill="none" stroke="#b0b0b0" stroke-width="1.25"/></svg>
<svg class="ab ic" style="left:443px;top:431.52px" width="24" height="24"><use href="#i-ide"/></svg>
<span class="t" style="letter-spacing:-0.104px;left:472.3px;top:434.42px">IDE ATA/ATAPI controllers</span>
<svg class="ab" style="left:424px;top:462.15px" width="9" height="12" viewBox="0 0 9 12"><path d="M2.9 2.6 L6.1 6 L2.9 9.4" fill="none" stroke="#b0b0b0" stroke-width="1.25"/></svg>
<svg class="ab ic" style="left:443px;top:456.15px" width="24" height="24"><use href="#i-imaging"/></svg>
<span class="t" style="letter-spacing:0.317px;left:472.3px;top:459.05px">Imaging devices</span>
<svg class="ab" style="left:424px;top:486.78px" width="9" height="12" viewBox="0 0 9 12"><path d="M2.9 2.6 L6.1 6 L2.9 9.4" fill="none" stroke="#b0b0b0" stroke-width="1.25"/></svg>
<svg class="ab ic" style="left:443px;top:480.78px" width="24" height="24"><use href="#i-keyboard"/></svg>
<span class="t" style="letter-spacing:0.321px;left:472.3px;top:483.68px">Keyboards</span>
<svg class="ab" style="left:424px;top:511.41px" width="9" height="12" viewBox="0 0 9 12"><path d="M2.9 2.6 L6.1 6 L2.9 9.4" fill="none" stroke="#b0b0b0" stroke-width="1.25"/></svg>
<svg class="ab ic" style="left:443px;top:505.41px" width="24" height="24"><use href="#i-mouse"/></svg>
<span class="t" style="letter-spacing:0.513px;left:472.3px;top:508.31px">Mice and other pointing devices</span>
<svg class="ab" style="left:424px;top:536.04px" width="9" height="12" viewBox="0 0 9 12"><path d="M2.9 2.6 L6.1 6 L2.9 9.4" fill="none" stroke="#b0b0b0" stroke-width="1.25"/></svg>
<svg class="ab ic" style="left:443px;top:530.04px" width="24" height="24"><use href="#i-monitor"/></svg>
<span class="t" style="letter-spacing:0.969px;left:472.3px;top:532.94px">Monitors</span>
<svg class="ab" style="left:424px;top:560.67px" width="9" height="12" viewBox="0 0 9 12"><path d="M2.9 2.6 L6.1 6 L2.9 9.4" fill="none" stroke="#b0b0b0" stroke-width="1.25"/></svg>
<svg class="ab ic" style="left:443px;top:554.67px" width="24" height="24"><use href="#i-network"/></svg>
<span class="t" style="letter-spacing:0.436px;left:472.3px;top:557.57px">Network adapters</span>
<svg class="ab" style="left:424px;top:585.30px" width="9" height="12" viewBox="0 0 9 12"><path d="M2.9 2.6 L6.1 6 L2.9 9.4" fill="none" stroke="#b0b0b0" stroke-width="1.25"/></svg>
<svg class="ab ic" style="left:443px;top:579.30px" width="24" height="24"><use href="#i-printer"/></svg>
<span class="t" style="letter-spacing:0.310px;left:472.3px;top:582.20px">Print queues</span>
<svg class="ab" style="left:424px;top:609.93px" width="9" height="12" viewBox="0 0 9 12"><path d="M2.9 2.6 L6.1 6 L2.9 9.4" fill="none" stroke="#b0b0b0" stroke-width="1.25"/></svg>
<svg class="ab ic" style="left:443px;top:603.93px" width="24" height="24"><use href="#i-cpu"/></svg>
<span class="t" style="letter-spacing:-0.197px;left:472.3px;top:606.83px">Processors</span>
<svg class="ab" style="left:424px;top:634.56px" width="9" height="12" viewBox="0 0 9 12"><path d="M2.9 2.6 L6.1 6 L2.9 9.4" fill="none" stroke="#b0b0b0" stroke-width="1.25"/></svg>
<svg class="ab ic" style="left:443px;top:628.56px" width="24" height="24"><use href="#i-security"/></svg>
<span class="t" style="letter-spacing:0.089px;left:472.3px;top:631.46px">Security devices</span>
<svg class="ab" style="left:424px;top:659.19px" width="9" height="12" viewBox="0 0 9 12"><path d="M2.9 2.6 L6.1 6 L2.9 9.4" fill="none" stroke="#b0b0b0" stroke-width="1.25"/></svg>
<svg class="ab ic" style="left:443px;top:653.19px" width="24" height="24"><use href="#i-swcomp"/></svg>
<span class="t" style="letter-spacing:0.426px;left:472.3px;top:656.09px">Software components</span>
<svg class="ab" style="left:424px;top:683.82px" width="9" height="12" viewBox="0 0 9 12"><path d="M2.9 2.6 L6.1 6 L2.9 9.4" fill="none" stroke="#b0b0b0" stroke-width="1.25"/></svg>
<svg class="ab ic" style="left:443px;top:677.82px" width="24" height="24"><use href="#i-swdev"/></svg>
<span class="t" style="letter-spacing:0.146px;left:472.3px;top:680.72px">Software devices</span>
<svg class="ab" style="left:422px;top:709.45px" width="12" height="10" viewBox="0 0 12 10"><path d="M1.5 3 L6 7.3 L10.5 3" fill="none" stroke="#404040" stroke-width="1.5"/></svg>
<svg class="ab ic" style="left:443px;top:702.45px" width="24" height="24"><use href="#i-sound"/></svg>
<span class="t" style="letter-spacing:0.402px;left:472.3px;top:705.35px">Sound, video and game controllers</span>
<svg class="ab ic" style="left:469px;top:727.08px" width="24" height="24"><use href="#i-sound"/></svg>
<span class="t" style="letter-spacing:0.271px;left:498.3px;top:729.98px">Intel(R) Display Audio</span>
<div class="sel" style="left:466.6px;top:751.51px;width:153.6px;height:24.4px"></div>
<svg class="ab ic" style="left:469px;top:751.71px" width="24" height="24"><use href="#i-sound"/></svg>
<span class="t" style="letter-spacing:0.074px;left:498.3px;top:754.61px">Realtek(R) Audio</span>
<svg class="ab ic" style="left:469px;top:776.34px" width="24" height="24"><use href="#i-sound"/></svg>
<span class="t" style="letter-spacing:0.667px;left:498.3px;top:779.24px">Virtual Audio Device</span>
<svg class="ab" style="left:424px;top:806.97px" width="9" height="12" viewBox="0 0 9 12"><path d="M2.9 2.6 L6.1 6 L2.9 9.4" fill="none" stroke="#b0b0b0" stroke-width="1.25"/></svg>
<svg class="ab ic" style="left:443px;top:800.97px" width="24" height="24"><use href="#i-storage"/></svg>
<span class="t" style="letter-spacing:0.343px;left:472.3px;top:803.87px">Storage controllers</span>
<svg class="ab" style="left:424px;top:831.60px" width="9" height="12" viewBox="0 0 9 12"><path d="M2.9 2.6 L6.1 6 L2.9 9.4" fill="none" stroke="#b0b0b0" stroke-width="1.25"/></svg>
<svg class="ab ic" style="left:443px;top:825.60px" width="24" height="24"><use href="#i-system"/></svg>
<span class="t" style="letter-spacing:-0.169px;left:472.3px;top:828.50px">System devices</span>
<svg class="ab" style="left:422px;top:857.23px" width="12" height="10" viewBox="0 0 12 10"><path d="M1.5 3 L6 7.3 L10.5 3" fill="none" stroke="#404040" stroke-width="1.5"/></svg>
<svg class="ab ic" style="left:443px;top:850.23px" width="24" height="24"><use href="#i-usb"/></svg>
<span class="t" style="letter-spacing:0.343px;left:472.3px;top:853.13px">Universal Serial Bus controllers</span>
<svg class="ab ic" style="left:469px;top:874.86px" width="24" height="24"><use href="#i-usb"/></svg>
<span class="t" style="letter-spacing:0.430px;left:498.3px;top:877.76px">Intel(R) USB 3.0 eXtensible Host Controller - 1.0 (Microsoft)</span>
<svg class="ab ic" style="left:469px;top:899.49px" width="24" height="24"><use href="#i-usb"/></svg>
<span class="t" style="letter-spacing:-0.276px;left:498.3px;top:902.39px">Realtek USB 2.0 Card Reader</span>
<svg class="ab ic" style="left:469px;top:924.12px" width="24" height="24"><use href="#i-usb"/></svg>
<span class="t" style="letter-spacing:0.116px;left:498.3px;top:927.02px">USB Composite Device</span>
<svg class="ab ic" style="left:469px;top:948.75px" width="24" height="24"><use href="#i-usb"/></svg>
<span class="t" style="letter-spacing:0.116px;left:498.3px;top:951.65px">USB Composite Device</span>
<svg class="ab ic" style="left:469px;top:973.38px" width="24" height="24"><use href="#i-usb"/></svg>
<span class="t" style="letter-spacing:-0.160px;left:498.3px;top:976.28px">USB Root Hub (USB 3.0)</span>
<svg class="ab" style="left:424px;top:1004.01px" width="9" height="12" viewBox="0 0 9 12"><path d="M2.9 2.6 L6.1 6 L2.9 9.4" fill="none" stroke="#b0b0b0" stroke-width="1.25"/></svg>
<svg class="ab ic" style="left:443px;top:998.01px" width="24" height="24"><use href="#i-printer"/></svg>
<span class="t" style="letter-spacing:0.186px;left:472.3px;top:1000.91px">WSD Print Provider</span>
<!-- scrollbar -->
<div id="sbtrack"></div><div id="sbthumb"></div>
<!-- status -->
<div id="status"></div><div class="sdiv" style="left:1237px"></div><div class="sdiv" style="left:1419px"></div>
<!-- context menu -->
<div id="ctx"></div>
<span class="ci" style="letter-spacing:0.448px;top:774px">Update driver</span>
<span class="ci" style="letter-spacing:0.194px;top:804px">Disable device</span>
<span class="ci" style="letter-spacing:0.414px;top:834.2px">Uninstall device</span>
<div class="cs" style="top:861.5px"></div>
<span class="ci" style="letter-spacing:0.190px;top:876.6px">Scan for hardware changes</span>
<div class="cs" style="top:904.5px"></div>
<span class="ci" style="letter-spacing:0.087px;top:918.5px;font-weight:bold">Properties</span>
</div>
</body></html>
